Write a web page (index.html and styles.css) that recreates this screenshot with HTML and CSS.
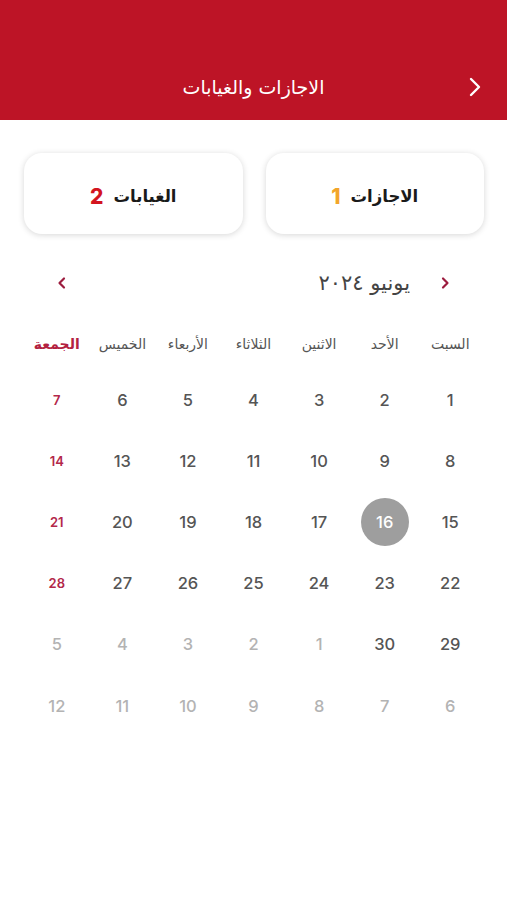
FILE: index.html
```html
<!DOCTYPE html>
<html lang="ar" dir="rtl">
<head>
<meta charset="utf-8">
<title>الاجازات والغيابات</title>
<link rel="stylesheet" href="styles.css">
</head>
<body>
<header class="topbar">
  <button class="back" aria-label="رجوع">
    <svg width="14" height="20" viewBox="0 0 14 20"><path d="M3 2 L11 10 L3 18" fill="none" stroke="#fff" stroke-width="2.4" stroke-linecap="round" stroke-linejoin="round"/></svg>
  </button>
  <h1 class="title">الاجازات والغيابات</h1>
  <span class="spacer"></span>
</header>

<section class="cards">
  <div class="card">
    <span class="card-label">الاجازات</span>
    <span class="card-num num-orange">1</span>
  </div>
  <div class="card">
    <span class="card-label">الغيابات</span>
    <span class="card-num num-red">2</span>
  </div>
</section>

<nav class="month-nav">
  <span class="chev">
    <svg width="10" height="14" viewBox="0 0 10 14"><path d="M3 2.5 L7.5 7 L3 11.5" fill="none" stroke="#9c1c3e" stroke-width="2.2" stroke-linecap="round" stroke-linejoin="round"/></svg>
  </span>
  <span class="month">يونيو ٢٠٢٤</span>
  <span class="chev chev-end">
    <svg width="10" height="14" viewBox="0 0 10 14"><path d="M7 2.5 L2.5 7 L7 11.5" fill="none" stroke="#9c1c3e" stroke-width="2.2" stroke-linecap="round" stroke-linejoin="round"/></svg>
  </span>
</nav>

<div class="weekdays">
  <span>السبت</span><span>الأحد</span><span>الاثنين</span><span>الثلاثاء</span><span>الأربعاء</span><span>الخميس</span><span class="fri">الجمعة</span>
</div>

<div class="days">
  <span>1</span><span>2</span><span>3</span><span>4</span><span>5</span><span>6</span><span class="fri">7</span>
  <span>8</span><span>9</span><span>10</span><span>11</span><span>12</span><span>13</span><span class="fri">14</span>
  <span>15</span><span class="selected"><b>16</b></span><span>17</span><span>18</span><span>19</span><span>20</span><span class="fri">21</span>
  <span>22</span><span>23</span><span>24</span><span>25</span><span>26</span><span>27</span><span class="fri">28</span>
  <span>29</span><span>30</span><span class="muted">1</span><span class="muted">2</span><span class="muted">3</span><span class="muted">4</span><span class="muted">5</span>
  <span class="muted">6</span><span class="muted">7</span><span class="muted">8</span><span class="muted">9</span><span class="muted">10</span><span class="muted">11</span><span class="muted">12</span>
</div>
</body>
</html>
```

FILE: styles.css
```css
* { box-sizing: border-box; }
html, body { margin: 0; padding: 0; background: #fff; }
body {
  width: 507px;
  min-height: 900px;
  font-family: "DejaVu Sans", "Noto Sans", sans-serif;
  color: #333;
}

.topbar {
  height: 120px;
  background: #bd1426;
  display: grid;
  grid-template-columns: 50px 1fr 50px;
  align-items: center;
  padding-top: 54px;
}
.back {
  background: none;
  border: 0;
  padding: 0;
  margin-right: 25px;
  display: flex;
  align-items: center;
  justify-content: flex-start;
  height: 30px;
}
.title {
  margin: 0;
  text-align: center;
  font-size: 19px;
  font-weight: 400;
  color: #fff;
  line-height: 30px;
}

.cards {
  display: flex;
  gap: 23px;
  padding: 33px 23px 0 24px;
}
.card {
  flex: 1;
  height: 81px;
  padding-top: 5px;
  border-radius: 18px;
  background: #fff;
  box-shadow: 0 1px 6px rgba(0,0,0,0.16);
  display: flex;
  align-items: center;
  justify-content: center;
  gap: 10px;
}
.card-label {
  font-size: 16.5px;
  font-weight: 700;
  color: #1a1a1a;
}
.card-num {
  font-family: "Inter", "Roboto", sans-serif;
  font-size: 21px;
  font-weight: 800;
}
.num-orange { color: #f2a52a; }
.num-red { color: #d3141f; }

.month-nav {
  display: flex;
  align-items: center;
  height: 40px;
  margin-top: 29px;
  padding: 0 57px 0 57px;
}
.chev { display: flex; align-items: center; width: 10px; }
.chev-end { margin-right: auto; }
.month {
  margin-right: 30px;
  font-size: 21px;
  color: #444;
}

.weekdays, .days {
  display: grid;
  grid-template-columns: repeat(7, 1fr);
  padding: 0 24px 0 24px;
  text-align: center;
}
.weekdays {
  margin-top: 16px;
  height: 50px;
  align-items: center;
  font-size: 14px;
  color: #555;
}
.weekdays .fri { color: #b3213f; font-weight: 700; }

.days {
  grid-auto-rows: 61.2px;
  align-items: center;
  justify-items: center;
  font-family: "Inter", "Roboto", sans-serif;
  font-size: 16.5px;
  font-weight: 500;
  color: #555;
}
.days span { display: flex; align-items: center; justify-content: center; }
.days .fri { color: #b3284a; font-size: 13px; font-weight: 600; }
.days .muted { color: #b3b3b3; }
.days .fri.muted { color: #b3b3b3; font-size: 16.5px; font-weight: 500; }
.days .selected b {
  width: 48px;
  height: 48px;
  border-radius: 50%;
  background: #9e9e9e;
  color: #fff;
  font-weight: 500;
  display: flex;
  align-items: center;
  justify-content: center;
}
```
